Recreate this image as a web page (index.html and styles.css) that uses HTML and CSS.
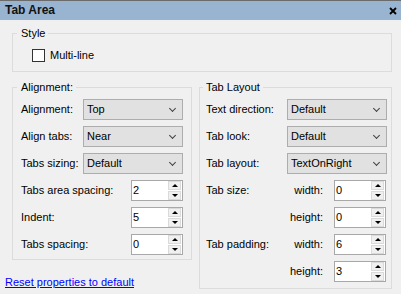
FILE: index.html
```html
<!DOCTYPE html>
<html lang="en">
<head>
  <meta charset="UTF-8" />
  <title>Tab Area</title>
  <link rel="stylesheet" href="styles.css">
</head>
<body>
  <div class="panel">
    <div class="titlebar">
      <span class="title">Tab Area</span>
      <svg class="close" width="8" height="8" viewBox="0 0 8 8">
        <path d="M1 1 L7 7 M7 1 L1 7" stroke="#000" stroke-width="1.8" fill="none" />
      </svg>
    </div>

    <div class="content">
      <fieldset class="group style-group">
        <legend>Style</legend>
        <label class="check"><span class="box"></span>Multi-line</label>
      </fieldset>

      <div class="columns">
        <div class="col-left">
          <fieldset class="group align-group">
            <legend>Alignment:</legend>
            <div class="grid grid-left">
              <span class="lbl">Alignment:</span>
              <div class="select">Top<span class="chev"></span></div>

              <span class="lbl">Align tabs:</span>
              <div class="select">Near<span class="chev"></span></div>

              <span class="lbl">Tabs sizing:</span>
              <div class="select">Default<span class="chev"></span></div>

              <span class="lbl span2">Tabs area spacing:</span>
              <div class="spin"><span class="val">2</span><span class="btns"><span class="up"></span><span class="down"></span></span></div>

              <span class="lbl span2">Indent:</span>
              <div class="spin"><span class="val">5</span><span class="btns"><span class="up"></span><span class="down"></span></span></div>

              <span class="lbl span2">Tabs spacing:</span>
              <div class="spin"><span class="val">0</span><span class="btns"><span class="up"></span><span class="down"></span></span></div>
            </div>
          </fieldset>
          <a class="reset" href="#">Reset properties to default</a>
        </div>

        <fieldset class="group layout-group">
          <legend>Tab Layout</legend>
          <div class="grid grid-right">
            <span class="lbl">Text direction:</span>
            <div class="select">Default<span class="chev"></span></div>

            <span class="lbl">Tab look:</span>
            <div class="select">Default<span class="chev"></span></div>

            <span class="lbl">Tab layout:</span>
            <div class="select">TextOnRight<span class="chev"></span></div>

            <span class="lbl">Tab size:</span>
            <span class="sub">width:</span>
            <div class="spin"><span class="val">0</span><span class="btns"><span class="up"></span><span class="down"></span></span></div>

            <span class="lbl"></span>
            <span class="sub">height:</span>
            <div class="spin"><span class="val">0</span><span class="btns"><span class="up"></span><span class="down"></span></span></div>

            <span class="lbl">Tab padding:</span>
            <span class="sub">width:</span>
            <div class="spin"><span class="val">6</span><span class="btns"><span class="up"></span><span class="down"></span></span></div>

            <span class="lbl"></span>
            <span class="sub">height:</span>
            <div class="spin"><span class="val">3</span><span class="btns"><span class="up"></span><span class="down"></span></span></div>
          </div>
        </fieldset>
      </div>
    </div>
  </div>
</body>
</html>
```

FILE: styles.css
```css
html, body {
  margin: 0;
  padding: 0;
}
body {
  background-color: #f0f0f0;
  color: #000;
  font-family: 'Liberation Sans', Arial, sans-serif;
  font-size: 11px;
  line-height: 13px;
  width: 401px;
  height: 294px;
  overflow: hidden;
}
.titlebar {
  border-top: 1px solid #6b6b6b;
  background-color: #99b4d1;
  height: 19px;
  display: flex;
  align-items: center;
  justify-content: space-between;
  padding: 0 4px 0 5px;
}
.title {
  font-weight: bold;
  font-size: 12px;
  color: #111;
}
.content {
  padding: 7px 9px 0 12px;
}
.group {
  margin: 0;
  border: 1px solid #dcdcdc;
  min-width: 0;
}
.group legend {
  padding: 0 3px;
  line-height: 13px;
}
.style-group {
  padding: 9px 10px 9px 19px;
}
.style-group legend {
  margin-left: -15px;
  padding: 0 3px 0 4px;
}
.check {
  display: flex;
  align-items: center;
  gap: 5px;
}
.box {
  width: 11px;
  height: 11px;
  background: #fff;
  border: 1px solid #333;
}
.columns {
  display: flex;
  align-items: flex-start;
  gap: 7px;
  margin-top: 9px;
}
.col-left {
  width: 180px;
}
.align-group {
  padding: 5px 8px 4px 8px;
}
.align-group legend {
  margin-left: -4px;
  padding: 0 3px 0 4px;
}
.layout-group {
  width: 193px;
  box-sizing: border-box;
  padding: 5px 4px 6px 6px;
}
.layout-group legend {
  margin-left: -3px;
}
.grid {
  display: grid;
  grid-auto-rows: 21px;
  row-gap: 6px;
  align-items: center;
}
.grid-left {
  grid-template-columns: 62px 48px 52px;
}
.grid-right {
  grid-template-columns: 81px 47px 53px;
}
.lbl {
  white-space: nowrap;
}
.span2 {
  grid-column: 1 / 3;
}
.sub {
  text-align: right;
  padding-right: 11px;
}
.select {
  grid-column: 2 / 4;
  height: 21px;
  box-sizing: border-box;
  border: 1px solid #adadad;
  background: #e1e1e1;
  padding: 0 3px;
  display: flex;
  align-items: center;
  justify-content: space-between;
}
.chev {
  width: 4px;
  height: 4px;
  border-right: 1px solid #404040;
  border-bottom: 1px solid #404040;
  transform: rotate(45deg);
  margin: -3px 4px 0 0;
}
.spin {
  grid-column: 3;
  width: 52px;
  height: 21px;
  box-sizing: border-box;
  border: 1px solid #a8a8a8;
  background: #fff;
  display: flex;
  align-items: center;
  justify-content: space-between;
  padding: 0 1px 0 1px;
}
.btns {
  display: flex;
  flex-direction: column;
  gap: 1px;
  width: 13px;
}
.up, .down {
  height: 7px;
  background: #f0f0f0;
  border: 1px solid #dadada;
  display: flex;
  align-items: center;
  justify-content: center;
}
.up::before, .down::before {
  content: '';
  width: 0;
  height: 0;
  border-left: 3px solid transparent;
  border-right: 3px solid transparent;
}
.up::before {
  border-bottom: 3px solid #000;
}
.down::before {
  border-top: 3px solid #000;
}
.reset {
  display: block;
  margin: 16px 0 0 -7px;
  color: #0000ff;
  text-decoration: underline;
  white-space: nowrap;
}
```
